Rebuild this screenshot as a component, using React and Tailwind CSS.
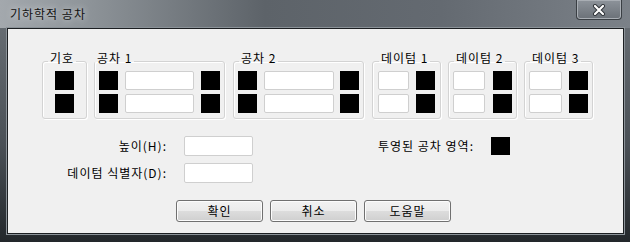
import React from "react";

function Sq({ className = "h-[19px]" }) {
  return <div className={`w-[19px] bg-black ${className}`} />;
}

function Field({ className }) {
  return <div className={`h-[19px] rounded-[2px] border border-[#cfcfcf] bg-white ${className}`} />;
}

function Group({ label, width, pad = "px-[4px]", legend = "ml-[1px]", children }) {
  return (
    <fieldset
      className={`${width} ${pad} rounded-[3px] border border-[#d3d3d3] pb-[5px] shadow-[inset_1px_1px_0_#ffffff,1px_1px_0_#ffffff]`}
    >
      <legend className={`${legend} px-[2px] pb-[6px] leading-[14px]`}>{label}</legend>
      <div className="flex flex-col gap-[4px]">{children}</div>
    </fieldset>
  );
}

function Button({ children }) {
  return (
    <button className="h-[22px] w-[87px] rounded-[3px] border border-[#707070] bg-[linear-gradient(#f2f2f2_0%,#ebebeb_50%,#dddddd_50%,#cfcfcf_100%)] leading-[18px] shadow-[inset_0_0_0_1px_#fcfcfc]">
      {children}
    </button>
  );
}

export default function App() {
  return (
    <div className="flex h-[242px] w-[630px] flex-col bg-[linear-gradient(#6c7278,#4a5056_60%,#23272b)] font-['Noto_Sans_CJK_KR','Noto_Sans',sans-serif] text-[12px] tracking-[1px] text-black">
      {/* title bar */}
      <div className="flex h-[28px] items-start justify-between bg-[linear-gradient(90deg,#a3a8ad_0%,#91979c_12%,#5d6369_42%,#646a71_70%,#7b8188_100%)]">
        <span className="pl-[10px] pt-[6px] leading-[16px] text-[#111] [text-shadow:0_0_6px_#e4e7ea]">기하학적 공차</span>
        <div className="mr-[8px] flex h-[20px] w-[46px] items-center justify-center rounded-b-[4px] border border-t-0 border-[#3a3f44] bg-[linear-gradient(#8d939a,#6b7178)] shadow-[inset_0_0_0_1px_#a9aeb4]">
          <svg width="14" height="12" viewBox="0 0 14 12">
            <path d="M3 2 L11 10 M11 2 L3 10" stroke="#2d3136" strokeWidth="4" strokeLinecap="round" />
            <path d="M3 2 L11 10 M11 2 L3 10" stroke="#ffffff" strokeWidth="2.2" strokeLinecap="round" />
          </svg>
        </div>
      </div>

      {/* client area */}
      <div className="mx-[7px] mr-[6px] h-[206px] border border-[#1c1f22] bg-[#f0f0f0] shadow-[0_0_0_1px_#8b9298]">
        <div className="flex gap-[7px] pl-[34px] pt-[22px]">
          <Group label="기호" width="w-[45px]">
            <div className="flex justify-center"><Sq /></div>
            <div className="flex justify-center"><Sq /></div>
          </Group>
          <Group label="공차 1" width="w-[131px]" legend="-ml-[4px]">
            <div className="flex items-center justify-between"><Sq /><Field className="w-[69px]" /><Sq /></div>
            <div className="flex items-center justify-between"><Sq /><Field className="w-[69px]" /><Sq /></div>
          </Group>
          <Group label="공차 2" width="ml-[1px] w-[131px]">
            <div className="flex items-center justify-between"><Sq /><Field className="w-[70px]" /><Sq /></div>
            <div className="flex items-center justify-between"><Sq /><Field className="w-[70px]" /><Sq /></div>
          </Group>
          <Group label="데이텀 1" width="ml-[1px] w-[69px]" pad="px-[5px]">
            <div className="flex items-center justify-between"><Field className="w-[31px]" /><Sq /></div>
            <div className="flex items-center justify-between"><Field className="w-[31px]" /><Sq /></div>
          </Group>
          <Group label="데이텀 2" width="w-[69px]" pad="px-[4px]">
            <div className="flex items-center justify-between"><Field className="w-[32px]" /><Sq /></div>
            <div className="flex items-center justify-between"><Field className="w-[32px]" /><Sq /></div>
          </Group>
          <Group label="데이텀 3" width="w-[69px]" pad="px-[4px]">
            <div className="flex items-center justify-between"><Field className="w-[33px]" /><Sq /></div>
            <div className="flex items-center justify-between"><Field className="w-[33px]" /><Sq /></div>
          </Group>
        </div>

        <div className="mt-[17px] flex items-start">
          <div className="grid grid-cols-[159px_69px] items-center gap-x-[17px] gap-y-[7px]">
            <span className="text-right">높이(H):</span>
            <div className="h-[20px] rounded-[2px] border border-[#cfcfcf] bg-white" />
            <span className="text-right">데이텀 식별자(D):</span>
            <div className="h-[20px] rounded-[2px] border border-[#cfcfcf] bg-white" />
          </div>
          <div className="ml-[125px] flex h-[20px] w-[132px] items-center justify-between">
            <span>투영된 공차 영역:</span>
            <Sq className="h-[18px]" />
          </div>
        </div>

        <div className="ml-[168px] mt-[17px] flex gap-[7px]">
          <Button>확인</Button>
          <Button>취소</Button>
          <Button>도움말</Button>
        </div>
      </div>
    </div>
  );
}
